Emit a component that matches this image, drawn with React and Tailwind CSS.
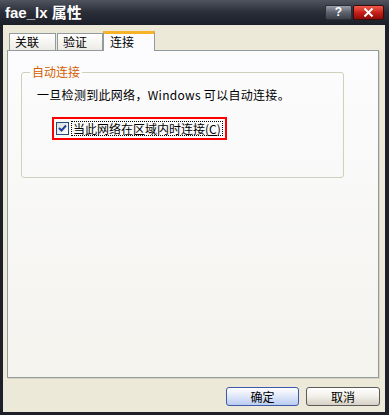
import React, { useState } from "react";

const Tab = ({ label, active }) =>
  active ? (
    <div className="h-[20px] -mb-px w-[52px] border border-b-0 border-[#919b9c] bg-[#fcfcfe] border-t-[3px] border-t-[#f6b32a] flex items-start pl-[6px] pt-[1px] text-[12px] leading-[14px] text-black">
      {label}
    </div>
  ) : (
    <div className="h-[17px] border border-b-0 border-[#919b9c] bg-gradient-to-b from-[#ffffff] to-[#ecebe6] flex items-center pl-[5px] text-[12px] leading-[14px] text-black">
      {label}
    </div>
  );

const Checkbox = ({ checked, onChange }) => (
  <button
    type="button"
    onClick={onChange}
    className="w-[13px] h-[13px] shrink-0 border border-[#1c5180] bg-gradient-to-br from-[#dcdcd7] to-[#ffffff] flex items-center justify-center"
  >
    {checked && (
      <svg width="9" height="9" viewBox="0 0 9 9">
        <path d="M1 4 L3.5 6.5 L8 1.5" stroke="#21409a" strokeWidth="2" fill="none" />
      </svg>
    )}
  </button>
);

const App = () => {
  const [auto, setAuto] = useState(true);

  return (
    <div className="w-[389px] h-[415px] bg-[#1d2029] flex flex-col font-['Noto_Sans_CJK_SC',sans-serif] select-none">
      {/* title bar */}
      <div className="h-[25px] shrink-0 flex items-center justify-between pl-[5px] pr-[5px] bg-gradient-to-b from-[#50545f] via-[#2a2e39] to-[#1c1f28]">
        <span className="text-white font-bold text-[15px] leading-none font-['Liberation_Sans','Noto_Sans_CJK_SC',sans-serif]">
          fae_lx 属性
        </span>
        <div className="flex gap-[1px] mt-[-1px]">
          <div className="w-[27px] h-[15px] rounded-[2px] border border-[#2b2e36] bg-gradient-to-b from-[#9a9ea8] via-[#5d626d] to-[#3d414b] flex items-center justify-center text-white font-bold text-[12px] leading-none font-['Liberation_Sans',sans-serif]">
            ?
          </div>
          <div className="w-[31px] h-[15px] rounded-[2px] border border-[#3a0d0d] bg-gradient-to-b from-[#f05a4a] via-[#c8201a] to-[#8e0c0a] flex items-center justify-center">
            <svg width="11" height="9" viewBox="0 0 11 9">
              <path d="M1.5 0.5 L9.5 8.5 M9.5 0.5 L1.5 8.5" stroke="#fff" strokeWidth="2" />
            </svg>
          </div>
        </div>
      </div>

      {/* body */}
      <div className="flex-1 ml-[3px] mr-[4px] mb-[3px] bg-[#ece9d8] flex flex-col">
        <div className="relative z-10 h-[19px] mt-[6px] ml-[6px] flex items-end">
          <div className="w-[47px]">
            <Tab label="关联" />
          </div>
          <div className="w-[46px] ml-[1px]">
            <Tab label="验证" />
          </div>
          <Tab label="连接" active />
        </div>

        <div className="ml-[4px] w-[372px] h-[328px] border border-[#919b9c] bg-gradient-to-b from-[#fcfcfe] to-[#f4f3ee] shadow-[1px_1px_0_#d6d3c6]">
          <fieldset className="ml-[13px] mt-[14px] w-[323px] h-[113px] border border-[#d0d0bf] rounded-[3px] pl-[15px]">
            <legend className="ml-[-7px] px-[2px] text-[12px] leading-[14px] text-[#d45e00]">
              自动连接
            </legend>
            <p className="mt-[9px] text-[12px] leading-[14px] tracking-[0.3px] text-black">
              一旦检测到此网络，Windows 可以自动连接。
            </p>
            <div className="mt-[15px] ml-[15px] w-[175px] h-[23px] border-2 border-[#ff0000] flex items-center pl-[2px]">
              <Checkbox checked={auto} onChange={() => setAuto(!auto)} />
              <span className="ml-[2px] px-[1px] border border-dotted border-black text-[12px] leading-[13px] text-black">
                当此网络在区域内时连接(<span className="underline">C</span>)
              </span>
            </div>
          </fieldset>
        </div>

        <div className="mt-[9px] pr-[5px] flex justify-end gap-[7px]">
          <button
            type="button"
            className="w-[73px] h-[19px] rounded-[3px] border border-[#3c5aa8] bg-gradient-to-b from-[#ffffff] via-[#dfe7f8] to-[#b9cbf1] text-[12px] leading-none text-black"
          >
            确定
          </button>
          <button
            type="button"
            className="w-[74px] h-[19px] rounded-[3px] border border-[#5a5a5a] bg-gradient-to-b from-[#ffffff] via-[#f1efe8] to-[#d6d0c5] text-[12px] leading-none text-black"
          >
            取消
          </button>
        </div>
      </div>
    </div>
  );
};

export default App;
